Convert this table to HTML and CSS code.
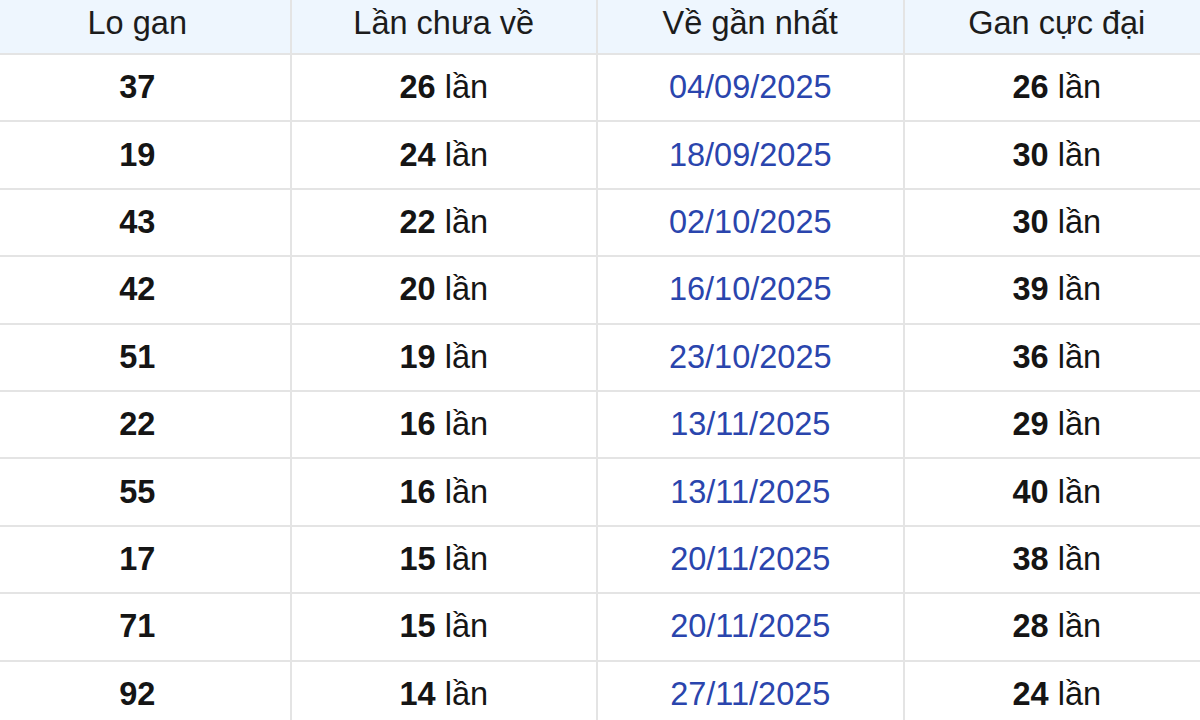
FILE: index.html
```html
<!DOCTYPE html>
<html lang="vi">
<head>
<meta charset="utf-8">
<title>Lo gan</title>
<link rel="stylesheet" href="styles.css">
</head>
<body>
<table class="gan-table">
  <thead>
    <tr>
      <th>Lo gan</th>
      <th>Lần chưa về</th>
      <th>Về gần nhất</th>
      <th>Gan cực đại</th>
    </tr>
  </thead>
  <tbody>
    <tr><td class="num">37</td><td><b>26</b> lần</td><td class="date">04/09/2025</td><td><b>26</b> lần</td></tr>
    <tr><td class="num">19</td><td><b>24</b> lần</td><td class="date">18/09/2025</td><td><b>30</b> lần</td></tr>
    <tr><td class="num">43</td><td><b>22</b> lần</td><td class="date">02/10/2025</td><td><b>30</b> lần</td></tr>
    <tr><td class="num">42</td><td><b>20</b> lần</td><td class="date">16/10/2025</td><td><b>39</b> lần</td></tr>
    <tr><td class="num">51</td><td><b>19</b> lần</td><td class="date">23/10/2025</td><td><b>36</b> lần</td></tr>
    <tr><td class="num">22</td><td><b>16</b> lần</td><td class="date">13/11/2025</td><td><b>29</b> lần</td></tr>
    <tr><td class="num">55</td><td><b>16</b> lần</td><td class="date">13/11/2025</td><td><b>40</b> lần</td></tr>
    <tr><td class="num">17</td><td><b>15</b> lần</td><td class="date">20/11/2025</td><td><b>38</b> lần</td></tr>
    <tr><td class="num">71</td><td><b>15</b> lần</td><td class="date">20/11/2025</td><td><b>28</b> lần</td></tr>
    <tr><td class="num">92</td><td><b>14</b> lần</td><td class="date">27/11/2025</td><td><b>24</b> lần</td></tr>
  </tbody>
</table>
</body>
</html>
```
FILE: styles.css
```css
html, body {
  margin: 0;
  padding: 0;
  background: #ffffff;
  overflow: hidden;
  width: 1200px;
  height: 720px;
}

.gan-table {
  margin: -9px 0 0 -17px;
  width: 1228px;
  border-collapse: collapse;
  table-layout: fixed;
  font-family: "Liberation Sans", Arial, sans-serif;
  font-size: 32.5px;
  color: #151515;
}

.gan-table th,
.gan-table td {
  border: 2px solid #e4e4e4;
  text-align: center;
  vertical-align: middle;
  padding: 0;
}

.gan-table th {
  height: 60px;
  background: #eef6fe;
  font-weight: normal;
  color: #1c1c1c;
}

.gan-table td {
  height: 65.4px;
}

.gan-table b,
.gan-table .num {
  font-weight: bold;
}

.gan-table .date {
  color: #2a45ad;
}
```
